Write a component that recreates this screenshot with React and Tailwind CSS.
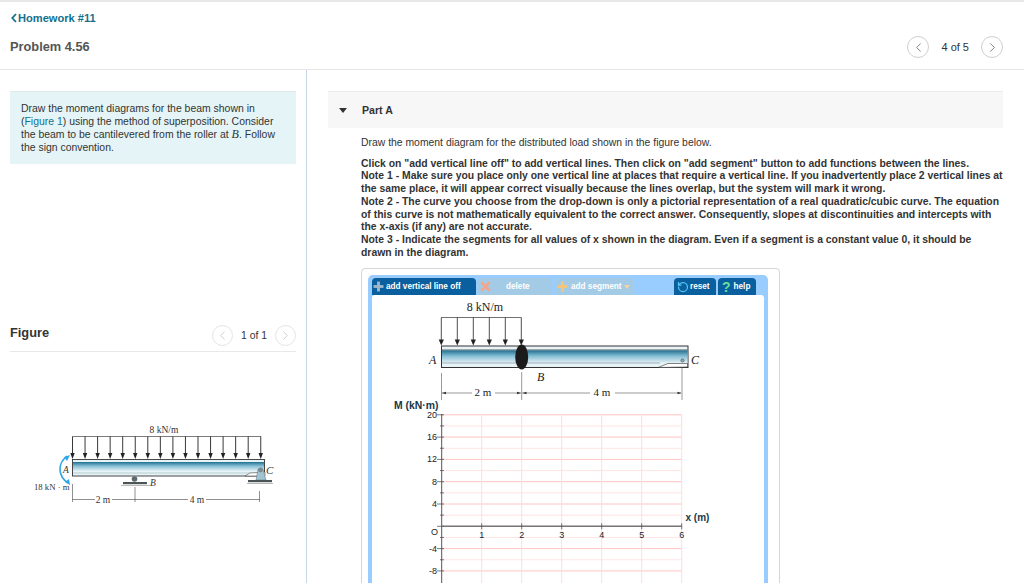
import { ChevronLeft, ChevronRight, Plus, X, RotateCcw } from "lucide-react";

const SANS = "font-['Liberation_Sans',Arial,sans-serif]";

function Pager({ label, faded }) {
  const ring = faded ? "h-[21px] w-[21px] border-[#e4e4e4] text-[#c4c4c4]" : "h-[22px] w-[22px] border-[#cfcfcf] text-[#666666]";
  const text = faded ? "mx-[8px] text-[10.4px]" : "mx-[12px] text-[11px]";
  return (
    <div className="flex items-center">
      <span className={`flex items-center justify-center rounded-full border ${ring}`}>
        <ChevronLeft className="h-[15px] w-[15px]" strokeWidth={1.3} />
      </span>
      <span className={`${text} text-[#333333]`}>{label}</span>
      <span className={`flex items-center justify-center rounded-full border ${ring}`}>
        <ChevronRight className="h-[15px] w-[15px]" strokeWidth={1.3} />
      </span>
    </div>
  );
}

function ArrowDown({ x, y1, y2, size = 2.4, width = 0.8 }) {
  return (
    <g>
      <line x1={x} y1={y1} x2={x} y2={y2 - 4} stroke="#222" strokeWidth={width} />
      <path d={`M${x - size} ${y2 - 6}L${x + size} ${y2 - 6}L${x} ${y2}Z`} fill="#222" />
    </g>
  );
}

function BeamGradient({ id }) {
  return (
    <linearGradient id={id} x1="0" y1="0" x2="0" y2="1">
      <stop offset="0" stopColor="#1f7090" />
      <stop offset="0.45" stopColor="#86bed4" />
      <stop offset="1" stopColor="#e4f1f6" />
    </linearGradient>
  );
}

// the small beam drawing in the left column
function FigureDrawing() {
  const arrows = Array.from({ length: 16 }, (_, i) => 72.5 + i * 12.55);
  return (
    <svg viewBox="0 420 306 100" className="block h-[100px] w-[306px]">
      <defs>
        <BeamGradient id="figBeam" />
      </defs>
      <text x="164" y="434" textAnchor="middle" fontSize="9.5" fontFamily="Liberation Serif" fill="#333">8 kN/m</text>
      <line x1="72.5" y1="437.5" x2="261" y2="437.5" stroke="#444" strokeWidth="0.7" />
      {arrows.map((x) => (
        <ArrowDown key={x} x={x} y1={437.5} y2={460} size={2.2} width={0.9} />
      ))}
      <rect x="72.5" y="460.5" width="192" height="16.5" fill="#e8f3f7" stroke="#333" strokeWidth="0.9" />
      <rect x="73" y="463" width="191" height="9" fill="url(#figBeam)" />
      <line x1="73" y1="474" x2="264" y2="474" stroke="#8aa" strokeWidth="0.5" />
      <path d="M245 477L250 474L265 473V477Z" fill="#fff" stroke="#333" strokeWidth="0.5" />
      {/* roller B */}
      <circle cx="134.5" cy="480" r="2.8" fill="#5d6a6e" />
      <rect x="123" y="483" width="24" height="2.2" fill="#4b5558" />
      <path d="M121 486.5H150" stroke="#b9b9b9" strokeWidth="1" />
      <text x="150" y="487" fontSize="9.5" fontStyle="italic" fontFamily="Liberation Serif" fill="#333">B</text>
      {/* pin C */}
      <path d="M256 481L258 470H263L266 481Z" fill="#9fc4d2" stroke="#556" strokeWidth="0.4" />
      <circle cx="260.5" cy="471" r="2.4" fill="#7b8a8f" />
      <rect x="248" y="481" width="24" height="2.2" fill="#4b5558" />
      <path d="M247 484.5H273" stroke="#b9b9b9" strokeWidth="1" />
      <text x="266" y="475" fontSize="11" fontStyle="italic" fontFamily="Liberation Serif" fill="#333">C</text>
      {/* applied moment */}
      <path d="M67 457C57 465 58 477 68 484" fill="none" stroke="#2fa6e6" strokeWidth="1.6" />
      <path d="M64 458L70 456L67 462Z M65 483L70 486L69 480Z" fill="#2fa6e6" />
      <text x="63" y="474" fontSize="9.5" fontStyle="italic" fontFamily="Liberation Serif" fill="#333">A</text>
      <text x="34" y="491" fontSize="8.7" fontFamily="Liberation Serif" fill="#333">18 kN · m</text>
      {/* dimensions */}
      <g stroke="#444" strokeWidth="0.6">
        <line x1="72.5" y1="485" x2="72.5" y2="503" />
        <line x1="135" y1="488" x2="135" y2="503" />
        <line x1="259.5" y1="492" x2="259.5" y2="503" />
        <line x1="72.5" y1="500.5" x2="95" y2="500.5" />
        <line x1="112" y1="500.5" x2="135" y2="500.5" />
        <line x1="135" y1="500.5" x2="188" y2="500.5" />
        <line x1="206" y1="500.5" x2="259.5" y2="500.5" />
      </g>
      <text x="103" y="503.5" textAnchor="middle" fontSize="9.5" fontFamily="Liberation Serif" fill="#333">2 m</text>
      <text x="197" y="503.5" textAnchor="middle" fontSize="9.5" fontFamily="Liberation Serif" fill="#333">4 m</text>
    </svg>
  );
}

function ToolButton({ children, className }) {
  return (
    <div className={`flex h-[17px] items-center rounded-t-[4px] text-[8.2px] font-bold ${className}`}>
      {children}
    </div>
  );
}

// beam and moment grid in the tool, viewBox uses page coordinates
function ToolDrawing() {
  const loads = [441.3, 457.3, 473.3, 489.3, 505.3, 521.3];
  const xs = [481.7, 521.7, 561.7, 601.7, 641.7, 681.7];
  const step = 11.15;
  const zero = 526.3;
  const minor = Array.from({ length: 15 }, (_, i) => zero - 111.5 + i * step);
  const yLabels = [
    ["20", 414.8],
    ["16", 437],
    ["12", 459.3],
    ["8", 481.6],
    ["4", 503.9],
    ["-4", 548.6],
    ["-8", 570.9],
  ];
  return (
    <svg viewBox="372 295 392 288" className="block h-[288px] w-[392px]">
      <defs>
        <BeamGradient id="toolBeam" />
      </defs>
      <text x="485" y="311" textAnchor="middle" fontSize="12" fontFamily="Liberation Serif" fill="#222">8 kN/m</text>
      <line x1="441.3" y1="317.5" x2="521.3" y2="317.5" stroke="#333" strokeWidth="0.7" />
      {loads.map((x) => (
        <ArrowDown key={x} x={x} y1={317.5} y2={345.5} size={2.6} />
      ))}
      <rect x="441.5" y="346" width="246.5" height="21.5" fill="#e8f3f7" stroke="#333" strokeWidth="1" />
      <line x1="442" y1="350" x2="687.5" y2="350" stroke="#333" strokeWidth="0.8" />
      <rect x="442" y="350.4" width="245.5" height="12.6" fill="url(#toolBeam)" />
      <line x1="442" y1="363" x2="660" y2="363" stroke="#789" strokeWidth="0.6" />
      <path d="M658 367.5L668 363.5H687.5V367Z" fill="#fff" stroke="#333" strokeWidth="0.6" />
      <circle cx="682.5" cy="360.5" r="1.6" fill="#9aa" stroke="#333" strokeWidth="0.5" />
      <ellipse cx="521.7" cy="357" rx="6.5" ry="12.5" fill="#1b1b1b" />
      <g fontFamily="Liberation Serif" fontStyle="italic" fontSize="12" fill="#222">
        <text x="429" y="364">A</text>
        <text x="691" y="364">C</text>
        <text x="537" y="381">B</text>
      </g>
      <g stroke="#555" strokeWidth="0.6">
        <line x1="441.5" y1="373" x2="441.5" y2="400" />
        <line x1="521.7" y1="372" x2="521.7" y2="400" />
        <line x1="682" y1="368" x2="682" y2="400" />
        <line x1="442" y1="393" x2="472" y2="393" />
        <line x1="495" y1="393" x2="521" y2="393" />
        <line x1="522" y1="393" x2="590" y2="393" />
        <line x1="615" y1="393" x2="681" y2="393" />
      </g>
      <path d="M442 393l4-1.3v2.6Z M521 393l-4-1.3v2.6Z M522.5 393l4-1.3v2.6Z M681.5 393l-4-1.3v2.6Z" fill="#333" />
      <text x="483" y="396" textAnchor="middle" fontSize="11" fontFamily="Liberation Serif" fill="#222">2 m</text>
      <text x="602" y="396" textAnchor="middle" fontSize="11" fontFamily="Liberation Serif" fill="#222">4 m</text>
      <text x="394" y="409" fontSize="10.4" fontWeight="700" fontFamily="Liberation Sans" fill="#17384a">M (kN·m)</text>
      {/* grid */}
      {minor.map((y, i) => (
        <line key={y} x1="441.7" y1={y} x2="681.7" y2={y} stroke={i % 2 === 0 ? "#ffc4c4" : "#ffe4e4"} strokeWidth="1" />
      ))}
      {xs.map((x) => (
        <line key={x} x1={x} y1="414.3" x2={x} y2="583" stroke="#ffdcdc" strokeWidth="1" />
      ))}
      <line x1="441.7" y1="414" x2="441.7" y2="583" stroke="#555" strokeWidth="1" />
      {minor.map((y, i) => (
        <line key={y} x1={i % 2 === 0 ? 437 : 440} y1={y} x2="444" y2={y} stroke="#444" strokeWidth="0.7" />
      ))}
      <line x1="441.7" y1={zero} x2="681.7" y2={zero} stroke="#777" strokeWidth="1.4" />
      {xs.map((x) => (
        <line key={x} x1={x} y1={zero - 3} x2={x} y2={zero + 3} stroke="#444" strokeWidth="0.7" />
      ))}
      <g fontFamily="Liberation Sans" fontSize="9" fill="#222">
        {yLabels.map(([t, y]) => (
          <text key={t} x="437" y={y + 3} textAnchor="end">{t}</text>
        ))}
        <text x="438" y="535" textAnchor="end">O</text>
        {xs.map((x, i) => (
          <text key={x} x={x} y="538" textAnchor="middle">{i + 1}</text>
        ))}
      </g>
      <text x="685.5" y="521" fontSize="10" fontWeight="700" fontFamily="Liberation Sans" fill="#17384a">x (m)</text>
    </svg>
  );
}

export default function App() {
  return (
    <div className={`${SANS} h-[583px] w-[1024px] overflow-hidden bg-white`}>
      {/* Header */}
      <header className="h-[70px] border-b border-[#e6e6e6]">
        <div className="h-[2px] bg-[#e8e8e8]" />
        <div className="flex items-center pl-[11px] pt-[9px] text-[11.1px] font-bold leading-[14px] text-[#14708f]">
          <svg viewBox="0 0 6 10" className="h-[10px] w-[6px]">
            <path d="M5 1L1.3 5L5 9" fill="none" stroke="#14708f" strokeWidth="1.8" />
          </svg>
          <span className="ml-[1px]">Homework #11</span>
        </div>
        <div className="flex items-center justify-between pl-[10px] pr-[21px] pt-[11px]">
          <h1 className="text-[12.8px] font-bold text-[#555555]">Problem 4.56</h1>
          <Pager label="4 of 5" />
        </div>
      </header>

      <div className="flex">
        {/* Left column */}
        <aside className="h-[513px] w-[307px] shrink-0 border-r border-[#c8d8e8] pl-[10px] pr-[10px] pt-[21px]">
          <div className="h-[73px] border-t border-[#dfe9ea] bg-[#e5f5f7] px-[11px] pt-[11px] text-[10.45px] leading-[12.7px] text-[#333333]">
            Draw the moment diagrams for the beam shown in
            <br />
            (<span className="text-[#14708f]">Figure 1</span>) using the method of superposition. Consider
            <br />
            the beam to be cantilevered from the roller at{" "}
            <i className="font-['Liberation_Serif',serif] text-[12px]">B</i>. Follow
            <br />
            the sign convention.
          </div>
          <div className="mt-[156px] flex h-[32px] items-start justify-between border-b border-[#e8e8e8]">
            <h2 className="mt-[6px] text-[12.8px] font-bold leading-[14px] text-[#333333]">Figure</h2>
            <div className="mt-[5px]">
              <Pager label="1 of 1" faded />
            </div>
          </div>
          <div className="-ml-[10px] mt-[67px]">
            <FigureDrawing />
          </div>
        </aside>

        {/* Right column */}
        <main className="min-w-0 flex-1 pl-[21px] pr-[21px] pt-[21px]">
          <div className="flex h-[37px] items-center border-t border-[#ececec] bg-[#f7f7f7] pl-[11px] pt-[1px] text-[10.6px] font-bold text-[#333333]">
            <span className="h-0 w-0 border-x-[4px] border-t-[5px] border-x-transparent border-t-[#333333]" />
            <span className="ml-[15px]">Part A</span>
          </div>
          <div className="pl-[33px]">
            <p className="mt-[9px] text-[10.4px] leading-[12.7px] text-[#333333]">
              Draw the moment diagram for the distributed load shown in the figure below.
            </p>
            <p className="mt-[8px] whitespace-nowrap text-[10.4px] font-bold leading-[12.7px] text-[#333333]">
              Click on "add vertical line off" to add vertical lines. Then click on "add segment" button to add functions between the lines.
              <br />
              Note 1 - Make sure you place only one vertical line at places that require a vertical line. If you inadvertently place 2 vertical lines at
              <br />
              the same place, it will appear correct visually because the lines overlap, but the system will mark it wrong.
              <br />
              Note 2 - The curve you choose from the drop-down is only a pictorial representation of a real quadratic/cubic curve. The equation
              <br />
              of this curve is not mathematically equivalent to the correct answer. Consequently, slopes at discontinuities and intercepts with
              <br />
              the x-axis (if any) are not accurate.
              <br />
              Note 3 - Indicate the segments for all values of x shown in the diagram. Even if a segment is a constant value 0, it should be
              <br />
              drawn in the diagram.
            </p>

            {/* Drawing tool */}
            <div className="mt-[9px] h-[400px] w-[419px] rounded-[4px] border border-[#d6d6d6] px-[6px] pt-[6px]">
              <div className="h-[380px] w-[400px] rounded-[5px] bg-[#99ccff] px-[4px] pt-[3px]">
                <div className="flex">
                  <ToolButton className="w-[104px] bg-[#0a5f9e] text-white">
                    <Plus className="-ml-[2px] -mr-[1px] h-[17px] w-[17px] shrink-0 text-[#9fb7c9]" strokeWidth={4} strokeLinecap="butt" />
                    <span>add vertical line off</span>
                  </ToolButton>
                  <ToolButton className="ml-[2px] w-[74px] bg-[#a3cbe6] text-white">
                    <X className="-ml-[1px] h-[17px] w-[17px] shrink-0 text-[#f5a58c]" strokeWidth={3.5} strokeLinecap="butt" />
                    <span className="ml-[12px]">delete</span>
                  </ToolButton>
                  <ToolButton className="ml-[4px] w-[77px] bg-[#a3cbe6] text-white">
                    <Plus className="-ml-[2px] h-[17px] w-[17px] shrink-0 text-[#f5c67a]" strokeWidth={4} strokeLinecap="butt" />
                    <span>add segment</span>
                    <span className="ml-[2px] h-0 w-0 border-x-[3px] border-t-[4px] border-x-transparent border-t-[#f5d6a0]" />
                  </ToolButton>
                  <ToolButton className="ml-[41px] w-[42px] bg-[#0a5f9e] pl-[3px] text-white">
                    <RotateCcw className="h-[12px] w-[12px] text-[#55c8f5]" strokeWidth={2.5} />
                    <span className="ml-[1px]">reset</span>
                  </ToolButton>
                  <ToolButton className="ml-[2px] w-[38px] bg-[#0a5f9e] pl-[4px] text-white">
                    <span className="text-[14px] leading-none text-[#66e0a0]">?</span>
                    <span className="ml-[3px]">help</span>
                  </ToolButton>
                </div>
                <div className="h-[360px] w-[392px] rounded-t-[3px] bg-white">
                  <ToolDrawing />
                </div>
              </div>
            </div>
          </div>
        </main>
      </div>
    </div>
  );
}
